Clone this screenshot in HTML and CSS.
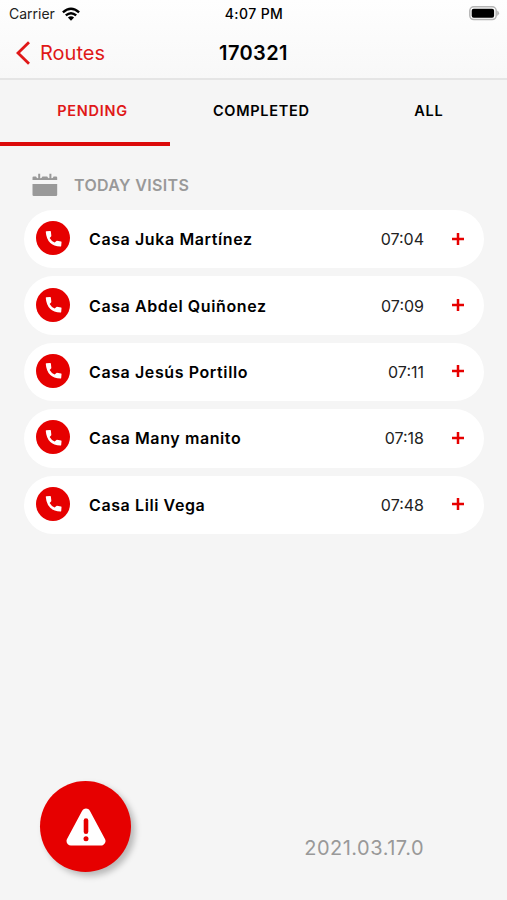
FILE: index.html
```
<!DOCTYPE html>
<html lang="en">
<head>
  <meta charset="UTF-8" />
  <title>Routes</title>
  <link rel="stylesheet" href="styles.css">
</head>
<body>
  <!-- Shared icons -->
  <svg class="sprite" width="0" height="0">
    <symbol id="phone" viewBox="0 0 24 24">
      <path d="M3.8 3.7 8.2 3.3Q8.9 3.3 9 4L9.5 8.8Q9.5 9.3 9.2 9.7L7.6 11.4Q9.6 15 13.3 16.6L15 15Q15.4 14.7 15.9 14.7L20.6 15.3Q21.3 15.4 21.2 16.1L20.8 20.5Q20.7 21.2 20 21.2 4.4 20.5 3.2 4.6 3.1 3.8 3.8 3.7Z" fill="#fff"/>
    </symbol>
    <symbol id="plus" viewBox="0 0 12 12">
      <path d="M6 0v12M0 6h12" stroke="#e60000" stroke-width="2.5"/>
    </symbol>
  </svg>

  <header>
    <div class="statusbar">
      <div class="carrier">
        <span>Carrier</span>
        <svg width="18" height="14" viewBox="0 0 18 14" fill="none" stroke="#000" stroke-width="2.4">
          <path d="M.9 5.3Q9-1.8 17.1 5.3M3.8 8.4Q9 3.9 14.2 8.4"/>
          <path d="M9 13.8 5.9 10.6Q9 7.9 12.1 10.6Z" fill="#000" stroke="none"/>
        </svg>
      </div>
      <span class="clock">4:07 PM</span>
      <svg class="battery" width="31" height="15" viewBox="0 0 31 15">
        <rect x=".8" y=".8" width="26.4" height="12.8" rx="4" fill="#fff" stroke="#b5b5b5" stroke-width="1.5"/>
        <rect x="2.7" y="2.7" width="22.4" height="9" rx="2" fill="#000"/>
        <path d="M28.2 4.5Q32 7.2 28.2 9.9Z" fill="#b5b5b5"/>
      </svg>
    </div>
    <div class="navbar">
      <a class="back">
        <svg width="14" height="24" viewBox="0 0 14 24" fill="none" stroke="#e01818" stroke-width="2.8">
          <path d="M13 1.2 2 12l11 10.8"/>
        </svg>
        <span>Routes</span>
      </a>
      <h1>170321</h1>
    </div>
  </header>

  <nav class="tabs">
    <div class="tab active"><span>PENDING</span></div>
    <div class="tab"><span>COMPLETED</span></div>
    <div class="tab"><span>ALL</span></div>
  </nav>

  <main>
    <div class="section-title">
      <svg width="26" height="24" viewBox="0 0 26 24" fill="#999">
        <path d="M.5 7V4.6Q.5 3.4 1.7 3.4H4Q5 5.6 6.2 5V.8h2V5Q9.6 5.6 10.4 3.4h4.8Q16.2 5.6 17.4 5V.8h2V5Q20.8 5.6 21.6 3.4H24q1.2 0 1.2 1.2V7Z"/>
        <path d="M.5 11h24.7v10.8q0 1.2-1.2 1.2H1.7Q.5 23 .5 21.8Z"/>
      </svg>
      <h2>TODAY VISITS</h2>
    </div>

    <div class="visits">
      <div class="visit">
        <div class="call"><svg width="21" height="21"><use href="#phone"/></svg></div>
        <span class="name">Casa Juka Martínez</span>
        <span class="time">07:04</span>
        <svg class="add" width="12" height="12"><use href="#plus"/></svg>
      </div>
      <div class="visit">
        <div class="call"><svg width="21" height="21"><use href="#phone"/></svg></div>
        <span class="name">Casa Abdel Quiñonez</span>
        <span class="time">07:09</span>
        <svg class="add" width="12" height="12"><use href="#plus"/></svg>
      </div>
      <div class="visit">
        <div class="call"><svg width="21" height="21"><use href="#phone"/></svg></div>
        <span class="name">Casa Jesús Portillo</span>
        <span class="time">07:11</span>
        <svg class="add" width="12" height="12"><use href="#plus"/></svg>
      </div>
      <div class="visit">
        <div class="call"><svg width="21" height="21"><use href="#phone"/></svg></div>
        <span class="name">Casa Many manito</span>
        <span class="time">07:18</span>
        <svg class="add" width="12" height="12"><use href="#plus"/></svg>
      </div>
      <div class="visit">
        <div class="call"><svg width="21" height="21"><use href="#phone"/></svg></div>
        <span class="name">Casa Lili Vega</span>
        <span class="time">07:48</span>
        <svg class="add" width="12" height="12"><use href="#plus"/></svg>
      </div>
    </div>
  </main>

  <footer>
    <div class="alert">
      <svg width="40" height="38" viewBox="0 0 40 38">
        <path d="M20 5 35 33H5Z" fill="#fff" stroke="#fff" stroke-width="9" stroke-linejoin="round"/>
        <path d="M20 12.5v11.3" stroke="#e60000" stroke-width="4.6" stroke-linecap="round"/>
        <circle cx="20" cy="30.8" r="2.5" fill="#e60000"/>
      </svg>
    </div>
    <span class="version">2021.03.17.0</span>
  </footer>
</body>
</html>
```

FILE: styles.css
```
* {
  box-sizing: border-box;
}

body {
  margin: 0;
  height: 900px;
  display: flex;
  flex-direction: column;
  background-color: #f5f5f5;
  font-family: Inter, "Liberation Sans", sans-serif;
  color: #000;
  overflow: hidden;
}

svg {
  display: block;
  flex-shrink: 0;
}

.sprite {
  position: absolute;
}

h1, h2 {
  margin: 0;
}

/* Header */
header {
  height: 80px;
  background: linear-gradient(#fefefe, #f8f8f8);
  border-bottom: 2px solid #e5e5e5;
}

.statusbar {
  height: 27px;
  padding: 0 7px 0 9px;
  display: grid;
  grid-template-columns: 1fr auto 1fr;
  align-items: center;
  font-size: 14px;
}

.carrier {
  display: flex;
  align-items: center;
  gap: 7px;
  color: #222;
}

.clock {
  margin-left: -1px;
  font-weight: 500;
  letter-spacing: 0.4px;
}

.battery {
  justify-self: end;
}

.navbar {
  height: 51px;
  padding: 0 16px;
  display: grid;
  grid-template-columns: 1fr auto 1fr;
  align-items: center;
}

.back {
  display: flex;
  align-items: center;
  gap: 10px;
  color: #e01818;
  font-size: 20px;
}

h1 {
  font-size: 20px;
  font-weight: 600;
  letter-spacing: 0.4px;
}

/* Tabs */
.tabs {
  height: 66px;
  display: flex;
}

.tab {
  width: 170px;
  padding-top: 21px;
  text-align: center;
  font-size: 14.5px;
  line-height: 20px;
  font-weight: 600;
  letter-spacing: 0.7px;
}

.tab:nth-child(1) {
  padding-left: 15px;
}

.tab:nth-child(2) {
  padding-left: 14px;
}

.tab:nth-child(3) {
  padding-left: 12px;
}

.tab.active {
  flex-shrink: 0;
  color: #e01818;
  border-bottom: 4px solid #dc0a0a;
}

/* Visits */
main {
  padding: 0 23px 0 24px;
}

.section-title {
  height: 64px;
  padding: 13px 0 0 8px;
  display: flex;
  align-items: center;
  gap: 16px;
}

h2 {
  color: #999;
  font-size: 16px;
  font-weight: 600;
  letter-spacing: 0.35px;
}

.visits {
  display: flex;
  flex-direction: column;
  gap: 8px;
}

.visit {
  height: 58.4px;
  padding: 0 20px 0 12px;
  display: flex;
  align-items: center;
  background-color: #fff;
  border-radius: 30px;
}

.call {
  width: 34px;
  height: 34px;
  margin: 0 19px 2px 0;
  display: flex;
  align-items: center;
  justify-content: center;
  background-color: #e60000;
  border-radius: 50%;
}

.name {
  flex-grow: 1;
  font-size: 16px;
  font-weight: 600;
  letter-spacing: 0.6px;
}

.time {
  color: #222;
  font-size: 16px;
}

.add {
  margin: 0 0 1px 28px;
}

/* Footer */
footer {
  height: 119px;
  margin-top: auto;
  padding: 0 83px 0 40px;
  display: flex;
  justify-content: space-between;
}

.alert {
  width: 91px;
  height: 91px;
  display: flex;
  align-items: center;
  justify-content: center;
  background-color: #e60000;
  border-radius: 50%;
  box-shadow: 4px 4px 6px rgba(0, 0, 0, 0.25);
}

.version {
  margin-top: 55px;
  color: #999;
  font-size: 20px;
  line-height: 24px;
  letter-spacing: 0.5px;
}
```
